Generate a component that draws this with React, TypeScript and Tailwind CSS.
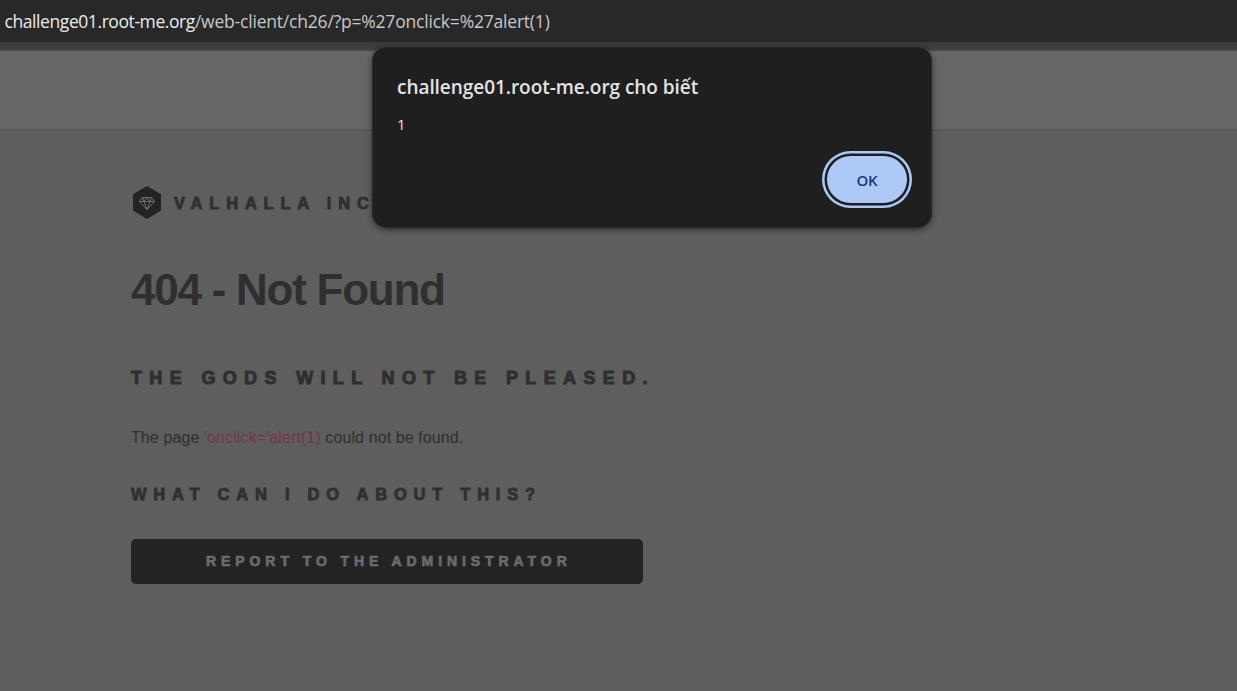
function AddressBar() {
  return (
    <header className="h-[42px] bg-[#282828] pl-[4.500px] font-['Open_Sans',sans-serif] text-[17.5px] leading-[42px] whitespace-nowrap text-[#c7c7c7]">
      <span className="tracking-[-0.42px] text-[#ececec]">challenge01.root-me.org</span>
      <span className="tracking-[-0.2px]">/web-client/ch26/?p=%27onclick=%27alert(1)</span>
    </header>
  );
}

function Logo() {
  return (
    <svg width="28" height="33" viewBox="0 0 28 33" fill="none">
      <path d="M14 0 28 8.2v16.4L14 33 0 24.6V8.2Z" fill="#232323" />
      <path
        d="M9.5 11.5h9l3 4L14 23.5l-7.5-8ZM6.5 15.5h15M11 15.500 14 23.500l3-8L14 11.500l-3 4-1.500-4M17 15.500l1.500-4"
        stroke="#777"
        strokeWidth="0.9"
        strokeLinejoin="round"
      />
    </svg>
  );
}

function AlertDialog() {
  return (
    <div
      role="alertdialog"
      className="absolute top-[46px] left-[372px] flex h-[182px] w-[560px] flex-col rounded-[15px] border border-[#292929] border-t-[#393939] bg-[#1f1f1f] pt-[26px] pr-[24px] pl-[24px] font-['Open_Sans',sans-serif] shadow-[0_2px_6px_rgba(0,0,0,0.5)]"
    >
      <h2 className="h-[28px] text-[19px] leading-[28px] font-semibold tracking-[-0.05px] whitespace-nowrap text-[#e3e3e3]">
        challenge01.root-me.org cho biết
      </h2>
      <p className="mt-[12px] h-[24px] text-[15px] leading-[23px] text-[#e3e3e3]">1</p>
      <button className="mt-[19px] h-[47px] w-[80px] self-end rounded-full bg-[#aec9f7] text-[15px] leading-[48px] font-semibold tracking-[-0.2px] text-[#133a78] shadow-[0_0_0_2.5px_#1f1f1f,0_0_0_5px_#aec9f7]">
        OK
      </button>
    </div>
  );
}

export default function App() {
  return (
    <div className="relative h-[691px] w-[1237px] overflow-hidden bg-[#5e5e5e] font-['Liberation_Sans',sans-serif] text-[#2f2f2f]">
      <AddressBar />
      <div className="h-[7px] bg-[#3c3c3c]" />
      <div className="h-[2px] bg-[#464646]" />
      <nav className="h-[79px] border-b border-[#575757] bg-[#666666]" />
      <main className="flex w-[643px] flex-col pl-[131px] whitespace-nowrap">
        <div className="mt-[56px] flex h-[33px] items-center pl-[2px]">
          <Logo />
          <span className="ml-[13px] pt-[2px] text-[16.5px] leading-[33px] font-bold tracking-[6.800px] [-webkit-text-stroke:0.8px_#2f2f2f]">
            VALHALLA INC
          </span>
        </div>
        <h1 className="mt-[41px] h-[60px] text-[44px] leading-[60px] font-bold tracking-[-1.250px]">404 - Not Found</h1>
        <h2 className="mt-[43px] h-[30px] text-[18px] leading-[30px] font-bold tracking-[7.350px] [-webkit-text-stroke:1px_#2f2f2f]">
          THE GODS WILL NOT BE PLEASED.
        </h2>
        <p className="mt-[33px] h-[24px] text-[16px] leading-[24px] tracking-[0.1px]">
          The page <span className="text-[#743544]">'onclick='alert(1)</span> could not be found.
        </p>
        <h3 className="mt-[29px] h-[30px] text-[16.5px] leading-[30px] font-bold tracking-[6.750px] [-webkit-text-stroke:0.8px_#2f2f2f]">
          WHAT CAN I DO ABOUT THIS?
        </h3>
        <button className="mt-[30px] h-[45px] w-[512px] rounded-[5px] bg-[#232323] pl-[75px] text-left text-[14px] leading-[45px] font-bold tracking-[4.920px] text-[#6b6b6b] [-webkit-text-stroke:0.7px_#6b6b6b]">
          REPORT TO THE ADMINISTRATOR
        </button>
      </main>
      <AlertDialog />
    </div>
  );
}
